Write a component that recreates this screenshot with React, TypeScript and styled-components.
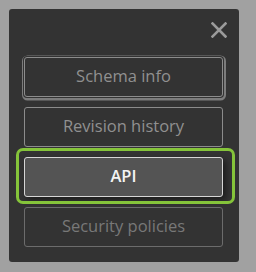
import React from 'react';
import styled, { createGlobalStyle, css } from 'styled-components';

// --- Styled Components ---

const GlobalStyle = createGlobalStyle`
  html, body {
    margin: 0;
    padding: 0;
    background: #a1a1a1;
  }
  body {
    font-family: "Open Sans", "Liberation Sans", sans-serif;
  }
`;

const Page = styled.div`
  width: 256px;
  height: 272px;
  padding: 9px 17px 10px 9px;
  box-sizing: border-box;
`;

const Panel = styled.div`
  width: 230px;
  height: 253px;
  box-sizing: border-box;
  background-color: #333333;
  border-radius: 3px;
  padding: 12px 16px 15px 15px;
  display: flex;
  flex-direction: column;
`;

const Header = styled.div`
  display: flex;
  flex-shrink: 0;
  justify-content: flex-end;
  height: 26px;
  margin-right: -5px;
  margin-bottom: 10px;
`;

const CloseButton = styled.button`
  width: 18px;
  height: 18px;
  padding: 0;
  border: none;
  background: none;
  display: flex;
  align-items: center;
  justify-content: center;
  cursor: pointer;
`;

const Menu = styled.div`
  display: flex;
  flex-direction: column;
  gap: 10px;
`;

type Variant = 'focused' | 'normal' | 'active' | 'disabled';

const MenuButton = styled.button<{ $variant: Variant }>`
  position: relative;
  width: 199px;
  height: 40px;
  flex-shrink: 0;
  box-sizing: border-box;
  border-radius: 3px;
  border: 1px solid #8c8c8c;
  background-color: #333333;
  color: #909090;
  font-family: "Open Sans", "Liberation Sans", sans-serif;
  font-size: 16.5px;
  line-height: 1;
  padding: 0 0 2px;
  cursor: pointer;

  ${({ $variant }) =>
    $variant === 'focused' &&
    css`
      box-shadow: 0 0 0 1px #333333, 0.5px 1px 0 2.5px #7c7c7c;
    `}

  ${({ $variant }) =>
    $variant === 'active' &&
    css`
      background-color: #545454;
      border-color: #d6d6d6;
      color: #f4f4f4;
      font-weight: 600;
      box-shadow: 3px 3px 6px rgba(0, 0, 0, 0.45);

      &::after {
        content: '';
        position: absolute;
        left: -9px;
        right: -13px;
        top: -10px;
        bottom: -8px;
        border: 3px solid #85c43a;
        border-radius: 7px;
        pointer-events: none;
      }
    `}

  ${({ $variant }) =>
    $variant === 'disabled' &&
    css`
      border-color: #6c6c6c;
      color: #787878;
      cursor: default;
    `}
`;

// --- Component ---

const items: { label: string; variant: Variant }[] = [
  { label: 'Schema info', variant: 'focused' },
  { label: 'Revision history', variant: 'normal' },
  { label: 'API', variant: 'active' },
  { label: 'Security policies', variant: 'disabled' },
];

const App = () => {
  return (
    <Page>
      <GlobalStyle />
      <Panel>
        <Header>
          <CloseButton aria-label="Close">
            <svg width="16" height="16" viewBox="0 0 16 16">
              <path d="M1.5 1.5 L14.5 14.5 M14.5 1.5 L1.5 14.5" stroke="#9b9b9b" strokeWidth="2.6" strokeLinecap="square" />
            </svg>
          </CloseButton>
        </Header>
        <Menu>
          {items.map((item) => (
            <MenuButton key={item.label} $variant={item.variant}>
              {item.label}
            </MenuButton>
          ))}
        </Menu>
      </Panel>
    </Page>
  );
};

export default App;
